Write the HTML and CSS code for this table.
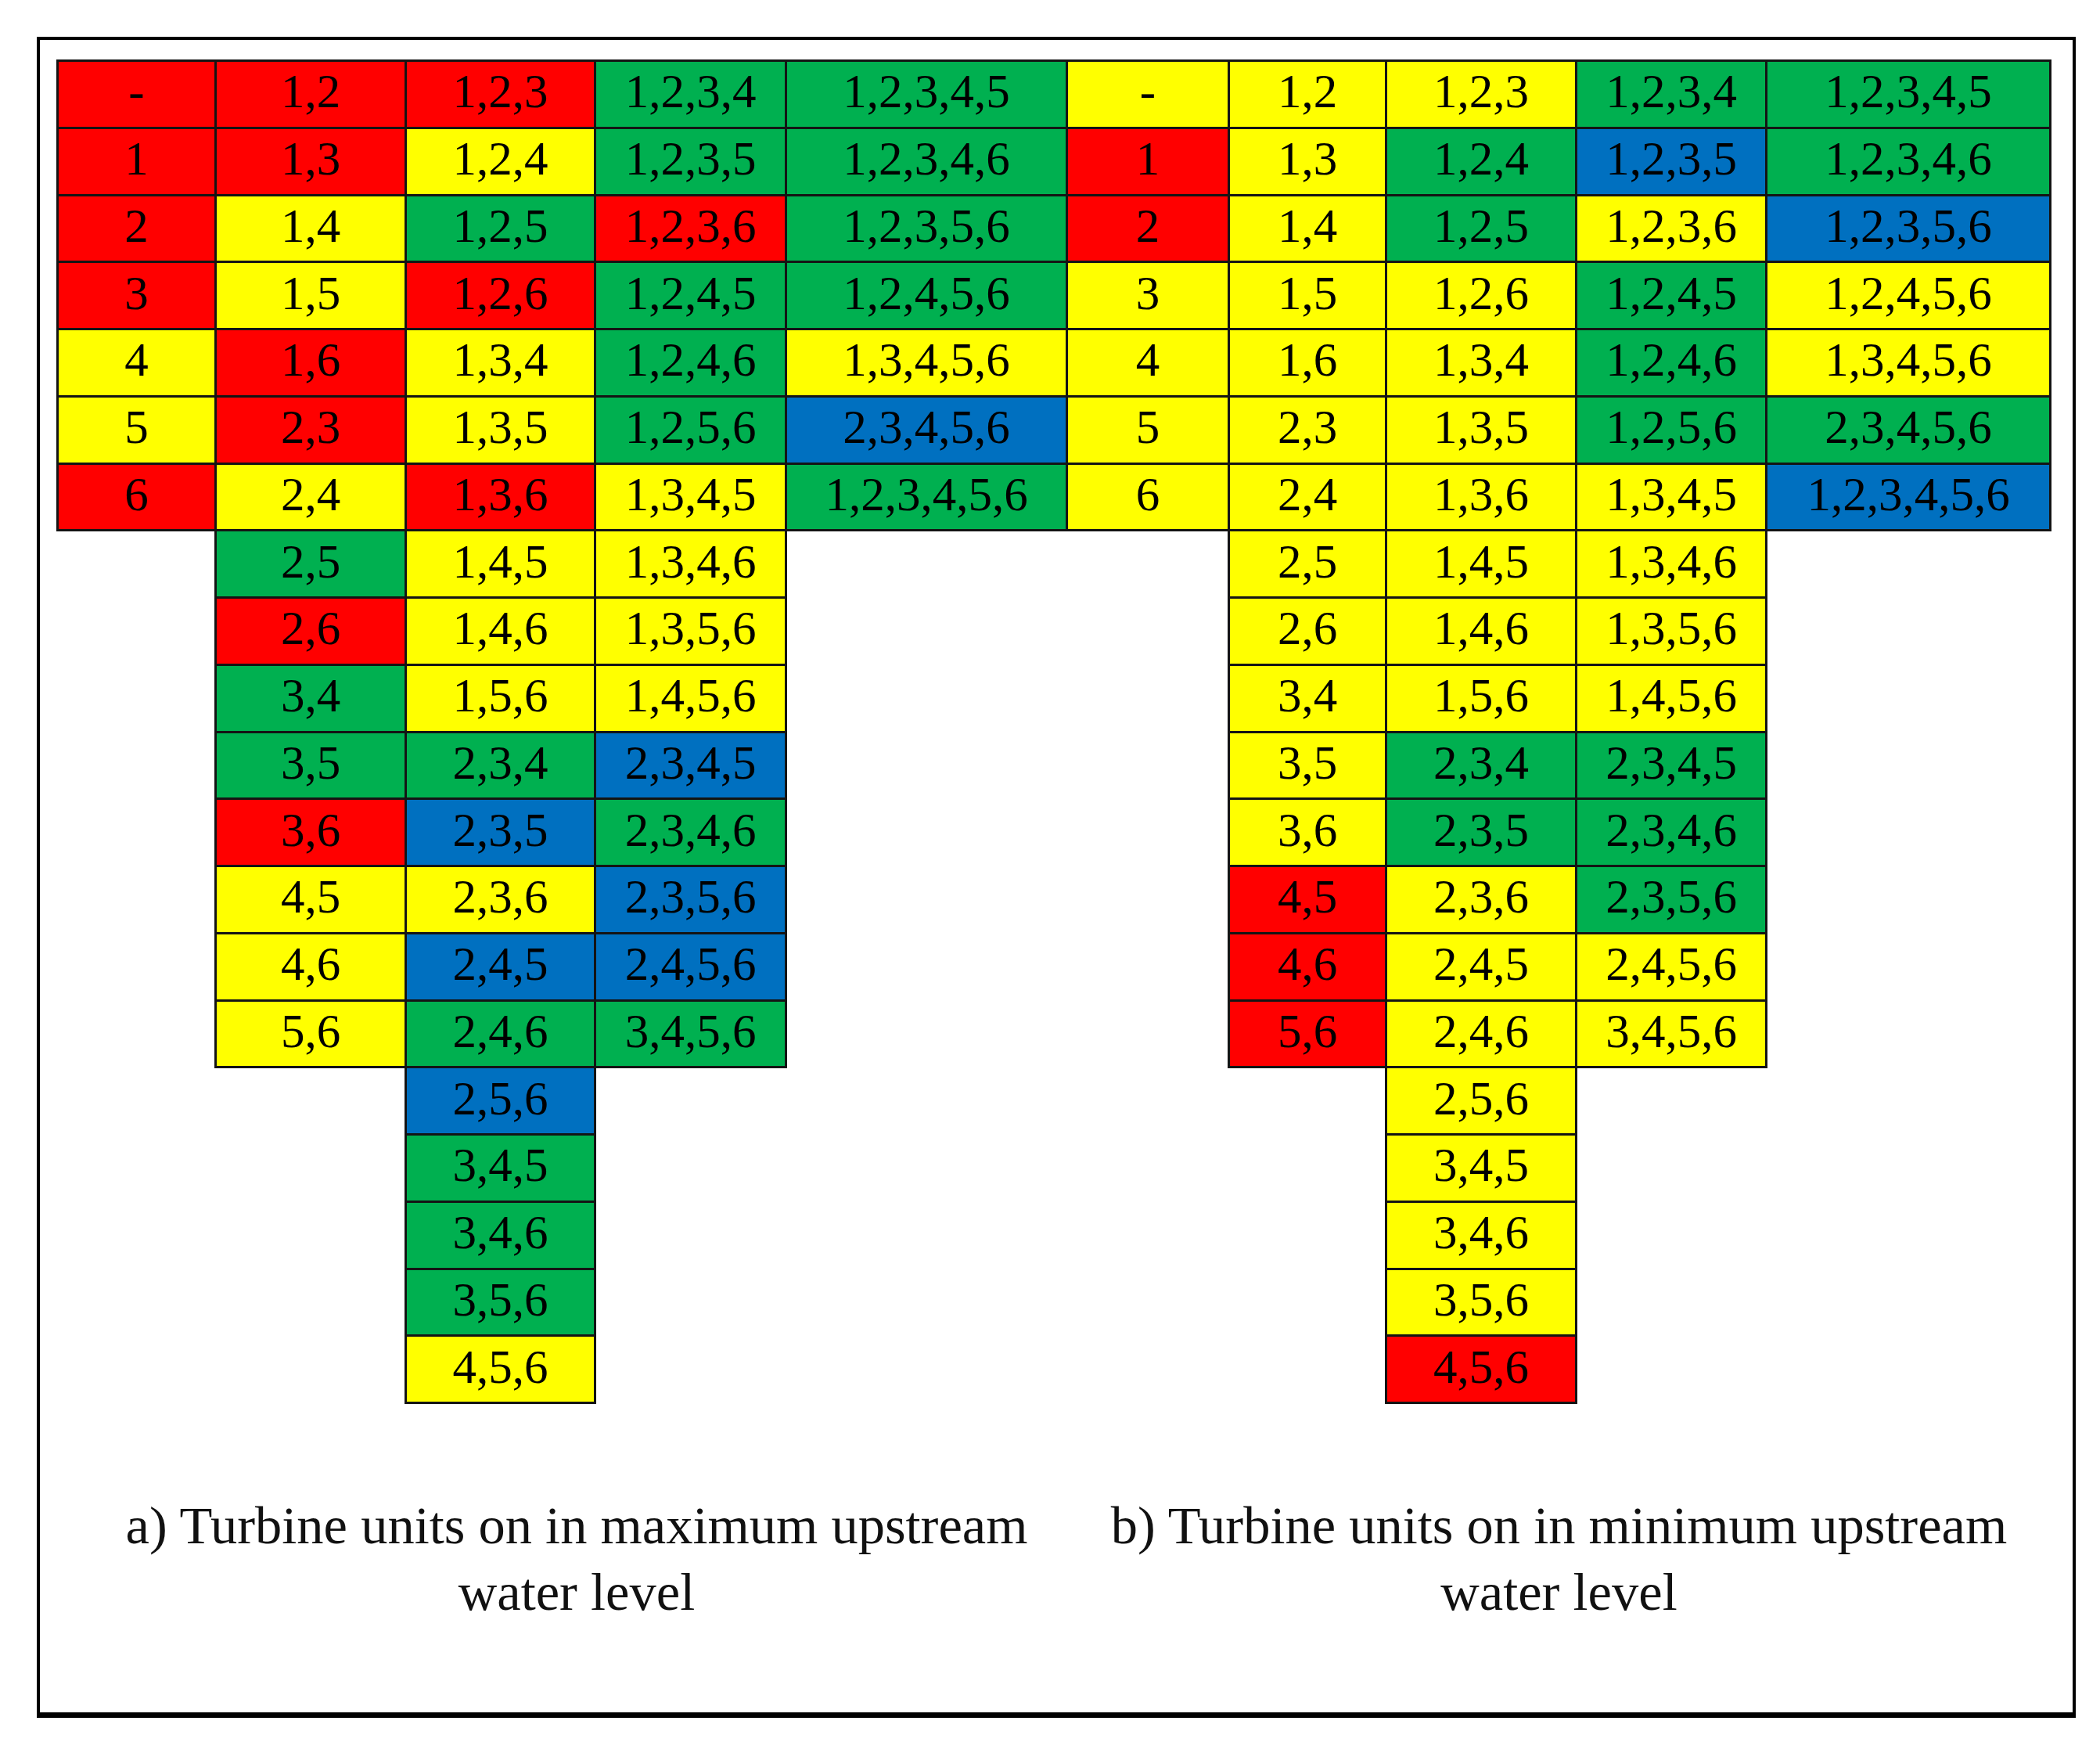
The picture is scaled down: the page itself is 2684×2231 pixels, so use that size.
FILE: index.html
```html
<!DOCTYPE html>
<html lang="en">
<head>
<meta charset="utf-8">
<title>Turbine units on</title>
<link rel="stylesheet" href="styles.css">
</head>
<body>
<div class="frame">
  <div class="tables">
    <div class="chart chart-a">
      <div class="col w-a1">
        <div class="cell r">-</div><div class="cell r">1</div><div class="cell r">2</div><div class="cell r">3</div><div class="cell y">4</div><div class="cell y">5</div><div class="cell r">6</div>
      </div>
      <div class="col w-a2">
        <div class="cell r">1,2</div><div class="cell r">1,3</div><div class="cell y">1,4</div><div class="cell y">1,5</div><div class="cell r">1,6</div><div class="cell r">2,3</div><div class="cell y">2,4</div><div class="cell g">2,5</div><div class="cell r">2,6</div><div class="cell g">3,4</div><div class="cell g">3,5</div><div class="cell r">3,6</div><div class="cell y">4,5</div><div class="cell y">4,6</div><div class="cell y">5,6</div>
      </div>
      <div class="col w-a3">
        <div class="cell r">1,2,3</div><div class="cell y">1,2,4</div><div class="cell g">1,2,5</div><div class="cell r">1,2,6</div><div class="cell y">1,3,4</div><div class="cell y">1,3,5</div><div class="cell r">1,3,6</div><div class="cell y">1,4,5</div><div class="cell y">1,4,6</div><div class="cell y">1,5,6</div><div class="cell g">2,3,4</div><div class="cell b">2,3,5</div><div class="cell y">2,3,6</div><div class="cell b">2,4,5</div><div class="cell g">2,4,6</div><div class="cell b">2,5,6</div><div class="cell g">3,4,5</div><div class="cell g">3,4,6</div><div class="cell g">3,5,6</div><div class="cell y">4,5,6</div>
      </div>
      <div class="col w-a4">
        <div class="cell g">1,2,3,4</div><div class="cell g">1,2,3,5</div><div class="cell r">1,2,3,6</div><div class="cell g">1,2,4,5</div><div class="cell g">1,2,4,6</div><div class="cell g">1,2,5,6</div><div class="cell y">1,3,4,5</div><div class="cell y">1,3,4,6</div><div class="cell y">1,3,5,6</div><div class="cell y">1,4,5,6</div><div class="cell b">2,3,4,5</div><div class="cell g">2,3,4,6</div><div class="cell b">2,3,5,6</div><div class="cell b">2,4,5,6</div><div class="cell g">3,4,5,6</div>
      </div>
      <div class="col w-a5">
        <div class="cell g">1,2,3,4,5</div><div class="cell g">1,2,3,4,6</div><div class="cell g">1,2,3,5,6</div><div class="cell g">1,2,4,5,6</div><div class="cell y">1,3,4,5,6</div><div class="cell b">2,3,4,5,6</div><div class="cell g">1,2,3,4,5,6</div>
      </div>
    </div>
    <div class="chart chart-b">
      <div class="col w-b1">
        <div class="cell y">-</div><div class="cell r">1</div><div class="cell r">2</div><div class="cell y">3</div><div class="cell y">4</div><div class="cell y">5</div><div class="cell y">6</div>
      </div>
      <div class="col w-b2">
        <div class="cell y">1,2</div><div class="cell y">1,3</div><div class="cell y">1,4</div><div class="cell y">1,5</div><div class="cell y">1,6</div><div class="cell y">2,3</div><div class="cell y">2,4</div><div class="cell y">2,5</div><div class="cell y">2,6</div><div class="cell y">3,4</div><div class="cell y">3,5</div><div class="cell y">3,6</div><div class="cell r">4,5</div><div class="cell r">4,6</div><div class="cell r">5,6</div>
      </div>
      <div class="col w-b3">
        <div class="cell y">1,2,3</div><div class="cell g">1,2,4</div><div class="cell g">1,2,5</div><div class="cell y">1,2,6</div><div class="cell y">1,3,4</div><div class="cell y">1,3,5</div><div class="cell y">1,3,6</div><div class="cell y">1,4,5</div><div class="cell y">1,4,6</div><div class="cell y">1,5,6</div><div class="cell g">2,3,4</div><div class="cell g">2,3,5</div><div class="cell y">2,3,6</div><div class="cell y">2,4,5</div><div class="cell y">2,4,6</div><div class="cell y">2,5,6</div><div class="cell y">3,4,5</div><div class="cell y">3,4,6</div><div class="cell y">3,5,6</div><div class="cell r">4,5,6</div>
      </div>
      <div class="col w-b4">
        <div class="cell g">1,2,3,4</div><div class="cell b">1,2,3,5</div><div class="cell y">1,2,3,6</div><div class="cell g">1,2,4,5</div><div class="cell g">1,2,4,6</div><div class="cell g">1,2,5,6</div><div class="cell y">1,3,4,5</div><div class="cell y">1,3,4,6</div><div class="cell y">1,3,5,6</div><div class="cell y">1,4,5,6</div><div class="cell g">2,3,4,5</div><div class="cell g">2,3,4,6</div><div class="cell g">2,3,5,6</div><div class="cell y">2,4,5,6</div><div class="cell y">3,4,5,6</div>
      </div>
      <div class="col w-b5">
        <div class="cell g">1,2,3,4,5</div><div class="cell g">1,2,3,4,6</div><div class="cell b">1,2,3,5,6</div><div class="cell y">1,2,4,5,6</div><div class="cell y">1,3,4,5,6</div><div class="cell g">2,3,4,5,6</div><div class="cell b">1,2,3,4,5,6</div>
      </div>
    </div>
  </div>
  <div class="captions">
    <p class="caption caption-a">a) Turbine units on in maximum upstream water level</p>
    <p class="caption caption-b">b) Turbine units on in minimum upstream water level</p>
  </div>
</div>
</body>
</html>
```

FILE: styles.css
```css
html, body {
  margin: 0;
  padding: 0;
  background: #ffffff;
}

body {
  padding: 47px 0 0 47px;
  font-family: "Liberation Serif", "Times New Roman", serif;
  color: #000;
}

.frame {
  box-sizing: border-box;
  width: 2606px;
  height: 2148px;
  border: 4px solid #000;
  border-bottom-width: 7px;
  padding: 25px 0 0 21px;
  background: #fff;
}

.tables {
  display: flex;
  align-items: flex-start;
}

.chart {
  display: flex;
  align-items: flex-start;
}

.chart + .chart {
  margin-left: -3px;
}

.col {
  display: flex;
  flex-direction: column;
}

.col + .col {
  margin-left: -3px;
}

.w-a1 { width: 205px; }
.w-a2 { width: 246px; }
.w-a3 { width: 245px; }
.w-a4 { width: 247px; }
.w-a5 { width: 362px; }
.w-b1 { width: 210px; }
.w-b2 { width: 204px; }
.w-b3 { width: 246px; }
.w-b4 { width: 246px; }
.w-b5 { width: 366px; }

.cell {
  box-sizing: border-box;
  height: 88.75px;
  border: 3px solid #141414;
  display: flex;
  align-items: center;
  justify-content: center;
  padding-bottom: 6px;
  font-size: 61px;
  letter-spacing: 0;
  white-space: nowrap;
  color: #000;
}

.cell + .cell {
  margin-top: -3px;
}

.r { background: #ff0000; }
.y { background: #ffff00; }
.g { background: #00b050; }
.b { background: #0070c0; }

.captions {
  display: flex;
  margin-top: 113px;
  margin-left: 38px;
}

.caption {
  margin: 0;
  font-size: 68.5px;
  line-height: 85px;
  text-align: center;
  color: #111;
}

.caption-a { width: 1254px; }
.caption-b { width: 1257px; }
```
